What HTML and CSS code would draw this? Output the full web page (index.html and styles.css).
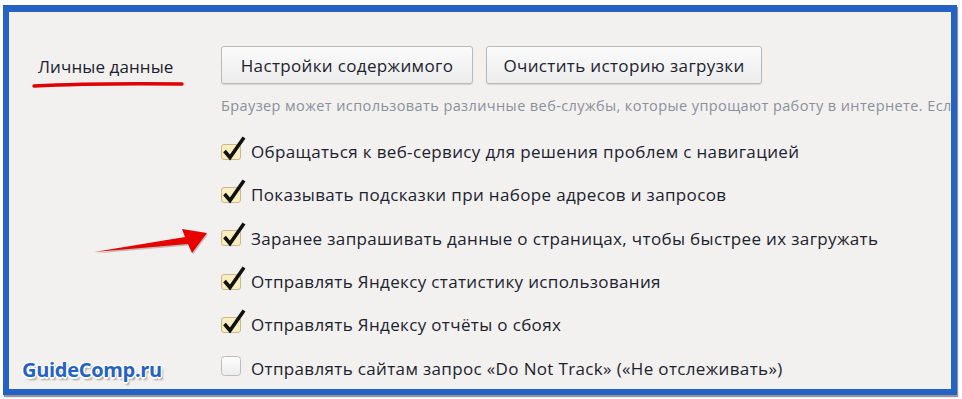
FILE: index.html
```
<!DOCTYPE html>
<html lang="ru">
<head>
    <meta charset="UTF-8">
    <title>Личные данные</title>
    <link rel="stylesheet" href="styles.css">
</head>
<body>
    <div class="frame">
        <div class="section">
            <div class="side">
                <div class="side-title">Личные данные</div>
                <svg class="underline" width="152" height="8" viewBox="0 0 152 8">
                    <path d="M2 5 Q 60 2 150 3" stroke="#e00000" stroke-width="3.4" fill="none" stroke-linecap="round"/>
                </svg>
            </div>
            <div class="main">
                <div class="buttons">
                    <button class="btn btn-content">Настройки содержимого</button>
                    <button class="btn btn-history">Очистить историю загрузки</button>
                </div>
                <div class="note">Браузер может использовать различные веб-службы, которые упрощают работу в интернете. Если</div>
                <ul class="options">
                    <li class="option">
                        <svg class="box" width="26" height="26" viewBox="0 0 26 26"><rect x="0.5" y="8.5" width="19" height="15" rx="2.5" fill="#f9eec0" stroke="#c7b88e"/><polyline points="3.5,15 9,21.5 23,1.5" fill="none" stroke="#111" stroke-width="3.6" stroke-linejoin="miter"/></svg>
                        Обращаться к веб-сервису для решения проблем с навигацией
                    </li>
                    <li class="option">
                        <svg class="box" width="26" height="26" viewBox="0 0 26 26"><rect x="0.5" y="8.5" width="19" height="15" rx="2.5" fill="#f9eec0" stroke="#c7b88e"/><polyline points="3.5,15 9,21.5 23,1.5" fill="none" stroke="#111" stroke-width="3.6" stroke-linejoin="miter"/></svg>
                        Показывать подсказки при наборе адресов и запросов
                    </li>
                    <li class="option">
                        <svg class="box" width="26" height="26" viewBox="0 0 26 26"><rect x="0.5" y="8.5" width="19" height="15" rx="2.5" fill="#f9eec0" stroke="#c7b88e"/><polyline points="3.5,15 9,21.5 23,1.5" fill="none" stroke="#111" stroke-width="3.6" stroke-linejoin="miter"/></svg>
                        Заранее запрашивать данные о страницах, чтобы быстрее их загружать
                    </li>
                    <li class="option">
                        <svg class="box" width="26" height="26" viewBox="0 0 26 26"><rect x="0.5" y="8.5" width="19" height="15" rx="2.5" fill="#f9eec0" stroke="#c7b88e"/><polyline points="3.5,15 9,21.5 23,1.5" fill="none" stroke="#111" stroke-width="3.6" stroke-linejoin="miter"/></svg>
                        Отправлять Яндексу статистику использования
                    </li>
                    <li class="option">
                        <svg class="box" width="26" height="26" viewBox="0 0 26 26"><rect x="0.5" y="8.5" width="19" height="15" rx="2.5" fill="#f9eec0" stroke="#c7b88e"/><polyline points="3.5,15 9,21.5 23,1.5" fill="none" stroke="#111" stroke-width="3.6" stroke-linejoin="miter"/></svg>
                        Отправлять Яндексу отчёты о сбоях
                    </li>
                    <li class="option">
                        <svg class="box" width="26" height="26" viewBox="0 0 26 26"><defs><linearGradient id="off" x1="0" y1="0" x2="0" y2="1"><stop offset="0" stop-color="#fdfdfd"/><stop offset="1" stop-color="#ececec"/></linearGradient></defs><rect x="0.5" y="4.5" width="19" height="19" rx="3" fill="url(#off)" stroke="#bcbcbc"/></svg>
                        Отправлять сайтам запрос «Do Not Track» («Не отслеживать»)
                    </li>
                </ul>
            </div>
        </div>

        <!-- стрелка-пометка -->
        <svg class="arrow" width="130" height="40" viewBox="0 0 130 40">
            <path d="M5 30 L96 15 L93 7 L118 11 L103 31 L99 22 Z" fill="#8a7a7a" opacity="0.45" transform="translate(1 1.5)"/>
            <path d="M5 30 L96 15 L93 7 L118 11 L103 31 L99 22 Z" fill="#e60000"/>
        </svg>

        <div class="watermark">GuideComp.ru</div>
    </div>
</body>
</html>
```

FILE: styles.css
```
* {
    box-sizing: border-box;
    margin: 0;
    padding: 0;
}
body {
    background: #fff;
    font-family: 'Open Sans', 'Noto Sans', sans-serif;
    color: #2a2f38;
}
.frame {
    position: relative;
    margin: 5px 5px 4px 3px;
    height: 390px;
    border: 6px solid #2462c3;
    border-top-width: 7px;
    background: #f2f1ef;
    box-shadow: 1px 2px 1px rgba(80, 80, 80, 0.6);
    overflow: hidden;
}
.section {
    display: flex;
    padding-top: 34px;
}
.side {
    width: 212px;
    flex-shrink: 0;
    padding-left: 23px;
    padding-top: 9px;
}
.side-title {
    font-size: 17px;
    color: #1c2230;
    padding-left: 6px;
    letter-spacing: 0.1px;
}
.underline {
    display: block;
    margin-top: 3px;
}
.main {
    flex: 1;
    min-width: 0;
    overflow: hidden;
}
.buttons {
    display: flex;
    gap: 13px;
}
.btn {
    height: 38px;
    font-family: inherit;
    font-size: 17px;
    letter-spacing: 0.35px;
    color: #1c2230;
    background: linear-gradient(#fbfbfb, #ececec);
    border: 1px solid #b9b9b9;
    border-radius: 3px;
    box-shadow: 0 1px 1px rgba(0, 0, 0, 0.12);
}
.btn-content {
    width: 252px;
}
.btn-history {
    width: 276px;
}
.note {
    margin-top: 12px;
    font-size: 14.5px;
    color: #8a909b;
    white-space: nowrap;
    letter-spacing: 0.4px;
}
.options {
    list-style: none;
    margin-top: 15px;
}
.option {
    display: flex;
    align-items: center;
    height: 43.3px;
    font-size: 17px;
    letter-spacing: 0.35px;
    white-space: nowrap;
    color: #1c2230;
}
.box {
    flex-shrink: 0;
    margin-right: 4px;
    margin-top: -6px;
}
.arrow {
    position: absolute;
    left: 80px;
    top: 210px;
}
.watermark {
    position: absolute;
    left: 13px;
    bottom: 6px;
    font-family: 'Open Sans', sans-serif;
    font-weight: bold;
    font-size: 20px;
    letter-spacing: -0.3px;
    color: #2462c3;
    text-shadow: -1.5px 0 #fff, 1.5px 0 #fff, 0 -1.5px #fff, 0 1.5px #fff,
                 -1px -1px #fff, 1px 1px #fff, -1px 1px #fff, 1px -1px #fff,
                 2px 3px 2px rgba(0, 0, 0, 0.35);
}
```
